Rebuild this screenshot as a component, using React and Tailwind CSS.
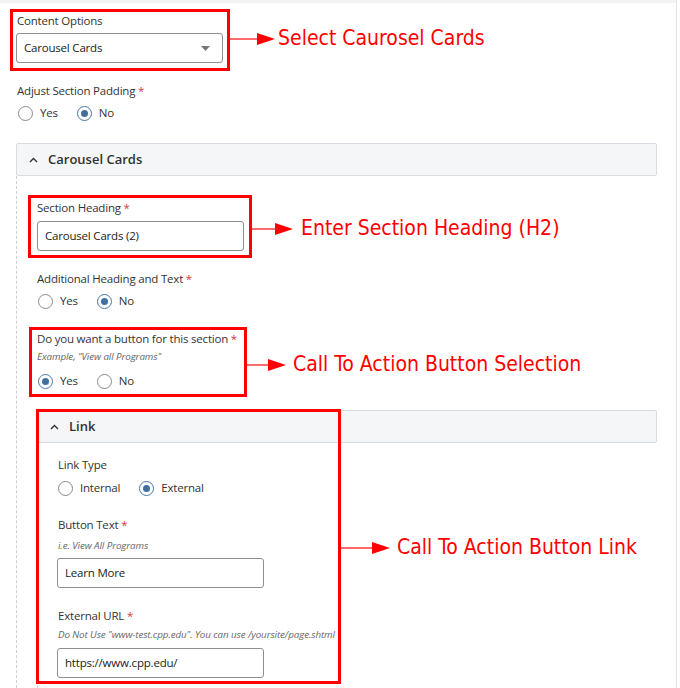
import React from "react";

const Radio = ({ label, checked }) => (
  <div className="flex items-center mr-[19px]">
    {checked ? (
      <span className="w-[15px] h-[15px] rounded-full border-[1.5px] border-[#4a76a3] flex items-center justify-center">
        <span className="w-[7px] h-[7px] rounded-full bg-[#41709f]" />
      </span>
    ) : (
      <span className="w-[15px] h-[15px] rounded-full border-[1.5px] border-[#8a8a8a]" />
    )}
    <span className="ml-[7px] text-[11.5px] tracking-[-0.2px] leading-4 text-[#333]">{label}</span>
  </div>
);

const Label = ({ children, required, className = "" }) => (
  <div className={`text-[11.5px] tracking-[-0.2px] leading-4 text-[#333] ${className}`}>
    {children}
    {required && <span className="text-[#d9363e]"> *</span>}
  </div>
);

const Hint = ({ children, className = "" }) => (
  <div className={`text-[9.8px] tracking-[-0.1px] leading-[14px] italic text-[#666] ${className}`}>{children}</div>
);

const Input = ({ value, className = "" }) => (
  <div
    className={`w-[207px] h-[30px] border border-[#8f8f8f] rounded-[3px] flex items-center px-[7px] text-[11.5px] tracking-[-0.2px] text-[#222] ${className}`}
  >
    {value}
  </div>
);

const Chevron = () => (
  <svg width="9" height="6" viewBox="0 0 9 6" className="shrink-0">
    <path d="M1 5 L4.5 1.5 L8 5" fill="none" stroke="#333" strokeWidth="1.4" />
  </svg>
);

const SectionHeader = ({ title, className = "" }) => (
  <div
    className={`h-[33px] bg-[#f5f6f8] border border-[#d8dbe0] rounded-[2px] flex items-center pl-[12px] ${className}`}
  >
    <Chevron />
    <span className="ml-[10px] text-[13px] font-semibold text-[#333]">{title}</span>
  </div>
);

// annotation arrow: line, head, then the caption
const Arrow = ({ left, top, line, gap, text }) => (
  <div className="absolute flex items-center" style={{ left, top }}>
    <div className="h-[2px] bg-[#ff6a6a]" style={{ width: line }} />
    <svg width="18" height="12" viewBox="0 0 18 12" className="shrink-0">
      <polygon points="0,0 18,6 0,12" fill="#ff0000" />
    </svg>
    <span
      className="text-[21px] leading-none text-[#ff0000] whitespace-nowrap"
      style={{ marginLeft: gap, fontFamily: '"DejaVu Sans Condensed", "DejaVu Sans", sans-serif' }}
    >
      {text}
    </span>
  </div>
);

const RedBox = ({ left, top, width, height }) => (
  <div
    className="absolute border-[3px] border-[#ff0000]"
    style={{ left, top, width, height }}
  />
);

export default function App() {
  return (
    <div
      className="relative w-[680px] h-[688px] overflow-hidden bg-white"
      style={{ fontFamily: '"Open Sans", "Noto Sans", sans-serif' }}
    >
      <div className="w-[677px] h-full border-r border-[#e3e3e3]">
        <div className="h-[3px] bg-[#f3f3f3]" />
        <div className="pl-[16px] pr-[19px]">
          <Label className="mt-[10px] ml-[1px]">Content Options</Label>
          <div className="mt-[4px] w-[207px] h-[30px] border border-[#8f8f8f] rounded-[3px] flex items-center justify-between pl-[7px] pr-[12px] text-[11.5px] tracking-[-0.2px] text-[#222]">
            <span>Carousel Cards</span>
            <svg width="9" height="5" viewBox="0 0 9 5">
              <polygon points="0,0 9,0 4.5,5" fill="#777" />
            </svg>
          </div>

          <Label required className="mt-[20px] ml-[1px]">Adjust Section Padding</Label>
          <div className="mt-[6px] ml-[2px] flex">
            <Radio label="Yes" />
            <Radio label="No" checked />
          </div>

          <SectionHeader title="Carousel Cards" className="mt-[22px]" />

          <div className="border-l border-dashed border-[#cfcfcf] pl-[20px] pt-[24px] pb-[20px]">
            <Label required>Section Heading</Label>
            <Input value="Carousel Cards (2)" className="mt-[5px]" />

            <Label required className="mt-[20px]">Additional Heading and Text</Label>
            <div className="mt-[6px] ml-[1px] flex">
              <Radio label="Yes" />
              <Radio label="No" checked />
            </div>

            <Label required className="mt-[22px]">Do you want a button for this section</Label>
            <Hint className="mt-[3px]">Example, "View all Programs"</Hint>
            <div className="mt-[9px] ml-[1px] flex">
              <Radio label="Yes" checked />
              <Radio label="No" />
            </div>

            <SectionHeader title="Link" className="mt-[21px]" />

            <div className="border-l border-dashed border-[#cfcfcf] pl-[20px] pt-[14px] pb-[20px]">
              <Label>Link Type</Label>
              <div className="mt-[7px] flex">
                <Radio label="Internal" />
                <Radio label="External" checked />
              </div>

              <Label required className="mt-[21px]">Button Text</Label>
              <Hint className="mt-[6px]">i.e. View All Programs</Hint>
              <Input value="Learn More" className="mt-[5px] -ml-[1px]" />

              <Label required className="mt-[20px]">External URL</Label>
              <Hint className="mt-[4px]">
                Do Not Use "www-test.cpp.edu". You can use /yoursite/page.shtml
              </Hint>
              <Input value="https://www.cpp.edu/" className="mt-[6px] -ml-[1px]" />
            </div>
          </div>
        </div>
      </div>

      <RedBox left={10} top={9} width={220} height={62} />
      <RedBox left={28} top={195} width={224} height={63} />
      <RedBox left={29} top={327} width={218} height={70} />
      <RedBox left={36} top={409} width={305} height={275} />

      <Arrow left={230} top={28} line={27} gap={3} text="Select Caurosel Cards" />
      <Arrow left={252} top={218} line={23} gap={8} text="Enter Section Heading (H2)" />
      <Arrow left={247} top={354} line={21} gap={7} text="Call To Action Button Selection" />
      <Arrow left={341} top={537} line={31} gap={7} text="Call To Action Button Link" />
    </div>
  );
}
